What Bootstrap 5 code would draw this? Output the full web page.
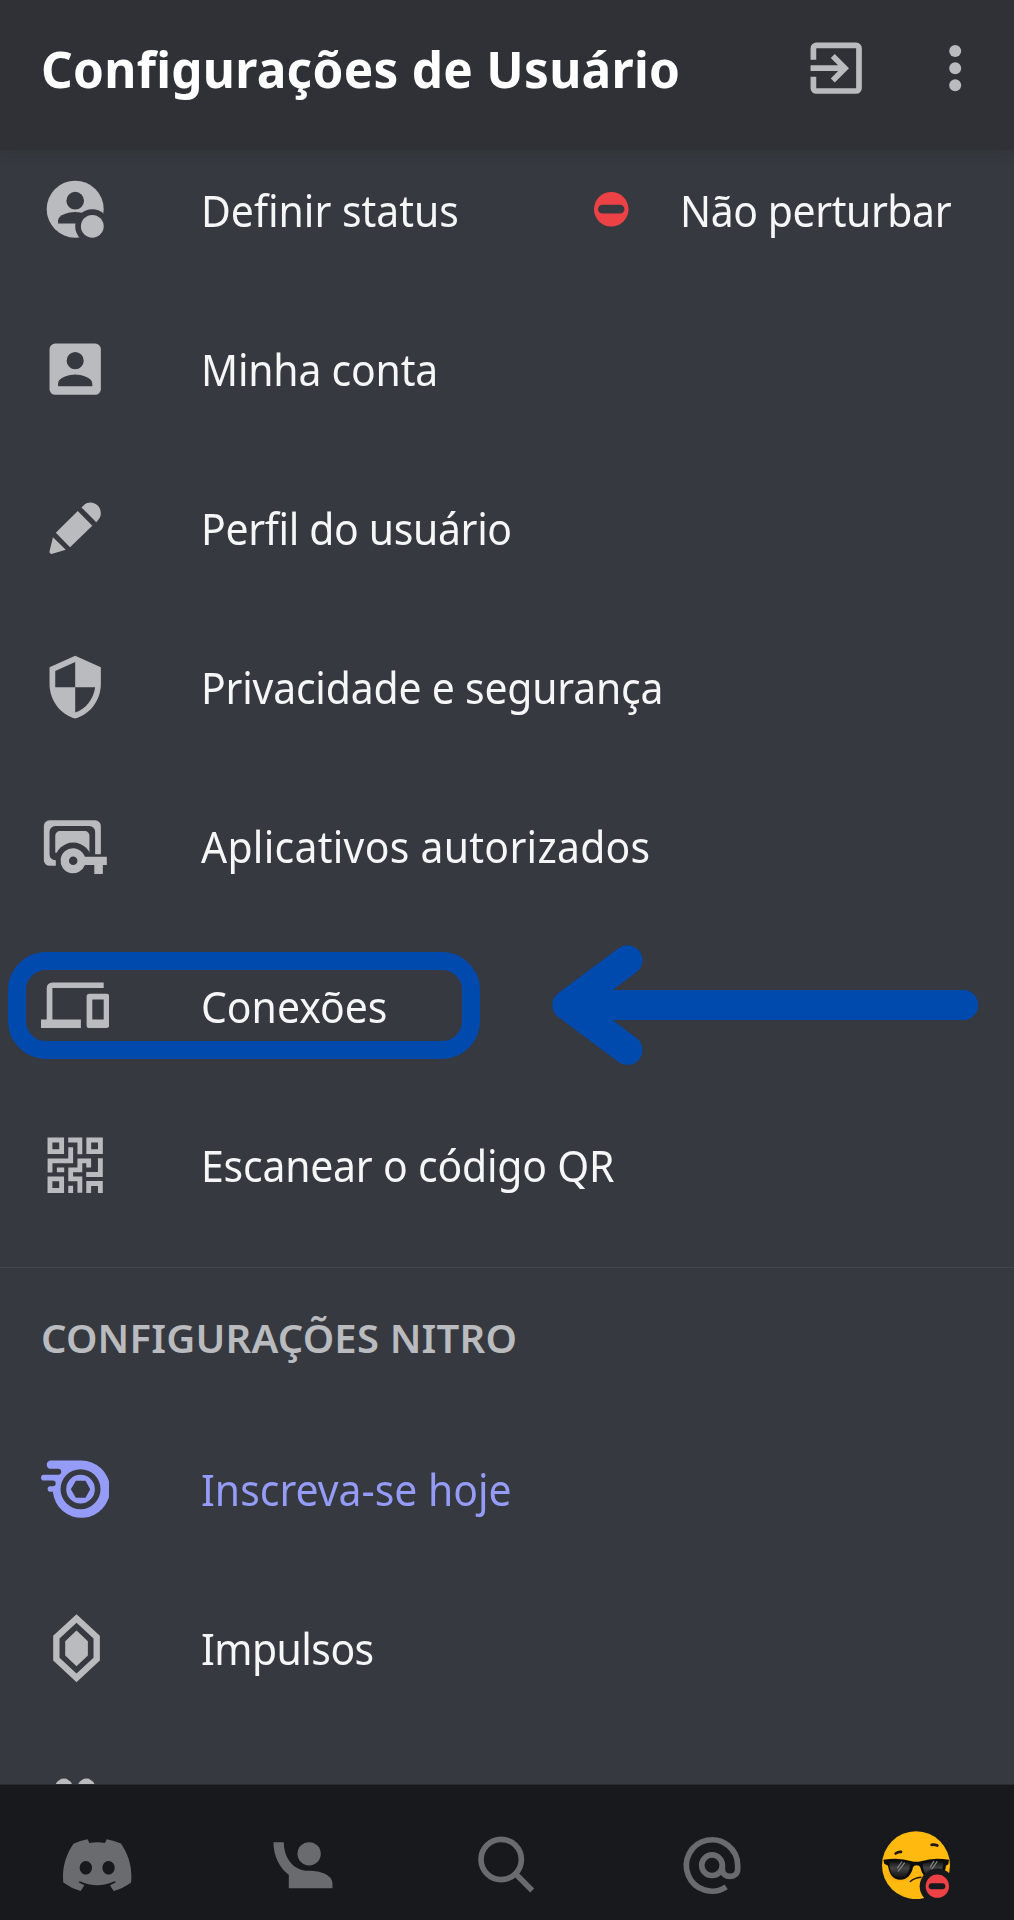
<!DOCTYPE html>
<html lang="pt-BR">
<head>
<meta charset="utf-8">
<meta name="viewport" content="width=device-width, initial-scale=1">
<title>Configurações de Usuário</title>
<link href="https://cdn.jsdelivr.net/npm/bootstrap@5.3.0/dist/css/bootstrap.min.css" rel="stylesheet">
<style>
body{background:#363940;font-family:"Noto Sans","Open Sans",sans-serif;color:#f6f6f7}
.app-shell{width:1014px;height:1920px}
.top-bar{height:150px;background:#303136;padding:0 0 13px 41px;z-index:2;box-shadow:0 2px 9px rgba(48,52,52,.9)}
.top-title{font-size:49.5px;font-weight:700;color:#fff;line-height:1;width:770px;letter-spacing:.28px;padding-top:3px}
.ico{width:68.4px;height:68.4px;fill:#b9bbbe;display:block;flex:none}
.exit-ico{margin-left:-9px}
.dots-ico{margin-left:51px}
.scroll-area{margin-top:-20px;z-index:1}
.item-row{height:159.2px;padding-left:40.8px}
.item-label{font-size:44px;line-height:60px;margin-left:91.5px;white-space:nowrap;transform:scaleX(.93);transform-origin:left center}
.track-loose{letter-spacing:.3px}
.track-snug{letter-spacing:-.22px}
.track-close{letter-spacing:-.36px}
.track-tight{letter-spacing:-.6px}
.status-dot{width:34.5px;height:34.5px;flex:none}
.status-box{left:594px}
.status-text{margin-left:51px;letter-spacing:-.45px}
.focus-box{left:8.3px;top:25.8px;width:472px;height:107px;border:18.6px solid #004aad;border-radius:38px}
.focus-arrow{left:545px;top:14px}
.group-title{border-top:1.5px solid #43464d;height:142.5px;padding:50.5px 0 0 41px;margin-top:22.5px;color:#b9bbbe;font-size:40px;font-weight:600;line-height:40px;letter-spacing:.2px}
.bottom-bar{height:136px;background:#18191c;border-top:1px solid #2a2c30;z-index:2;padding-top:46px}
.nav-strip{margin:0 -5px}
.nav-strip .ico{fill:#6a6b6f}
.nitro{color:#949cf7}
.nitro .ico{fill:#949cf7}
</style>
</head>
<body>
<div class="app-shell d-flex flex-column overflow-hidden">
  <header class="top-bar d-flex align-items-center position-relative flex-shrink-0">
    <h1 class="top-title mb-0">Configurações de Usuário</h1>
    <svg class="ico exit-ico" viewBox="0 0 24 24"><path d="M10.09 15.59 11.5 17l5-5-5-5-1.41 1.41L12.67 11H3v2h9.67zM19 3H5a2 2 0 0 0-2 2v4h2V5h14v14H5v-4H3v4a2 2 0 0 0 2 2h14a2 2 0 0 0 2-2V5a2 2 0 0 0-2-2z"/></svg>
    <svg class="ico dots-ico" viewBox="0 0 24 24"><circle cx="12" cy="6" r="2.1"/><circle cx="12" cy="12" r="2.1"/><circle cx="12" cy="18" r="2.1"/></svg>
  </header>

  <main class="scroll-area position-relative flex-grow-1 overflow-hidden">
    <div class="item-row d-flex align-items-center position-relative">
      <svg class="ico" viewBox="0 0 24 24"><defs><mask id="cut"><path fill="#fff" d="M0 0h24v24H0z"/><circle fill="#000" cx="12" cy="9" r="3.1"/><path fill="#000" d="M6 17v-1c0-2 3.6-3 6-3s6 1 6 3v1z"/><circle fill="#000" cx="18" cy="18" r="6"/></mask></defs><circle cx="12" cy="12" r="10" mask="url(#cut)"/><circle cx="18" cy="18" r="4"/></svg>
      <span class="item-label">Definir status</span>
      <div class="status-box position-absolute d-flex align-items-center">
        <svg class="status-dot" viewBox="0 0 34 34"><circle cx="17" cy="17" r="17" fill="#ed4245"/><rect x="4" y="12.6" width="26" height="8.6" rx="4.3" fill="#363940"/></svg>
        <span class="item-label status-text">Não perturbar</span>
      </div>
    </div>
    <div class="item-row d-flex align-items-center">
      <svg class="ico" viewBox="0 0 24 24"><path d="M3 5v14a2 2 0 0 0 2 2h14a2 2 0 0 0 2-2V5a2 2 0 0 0-2-2H5a2 2 0 0 0-2 2zm12 4a3 3 0 1 1-6 0 3 3 0 0 1 6 0zm-9 8c0-2 4-3.1 6-3.1s6 1.1 6 3.1v1H6z"/></svg>
      <span class="item-label track-snug">Minha conta</span>
    </div>
    <div class="item-row d-flex align-items-center">
      <svg class="ico" viewBox="0 0 24 24"><path d="m12.9 6 5.1 5.1-7.8 7.6-5-5.1zM4.2 15.2l4.5 4.4-4.7 1.4c-.6.2-1.1-.2-1-.9zM14.2 4.7l1-.9c1.2-1.1 3.2-1.1 4.5.1 1.5 1.4 1.7 3.5.6 4.9l-.9 1.1z"/></svg>
      <span class="item-label track-close">Perfil do usuário</span>
    </div>
    <div class="item-row d-flex align-items-center">
      <svg class="ico" viewBox="0 0 24 24"><path fill-rule="evenodd" d="M12 1 3 5v6c0 5.55 3.84 10.74 9 12 5.16-1.26 9-6.45 9-12V5zM12 12H5V6.3l7-3.1zM12 12h7c-.53 4.12-3.28 7.7-7 8.9z"/></svg>
      <span class="item-label track-snug">Privacidade e segurança</span>
    </div>
    <div class="item-row d-flex align-items-center">
      <svg class="ico" viewBox="0 0 24 24"><defs><mask id="keycut"><path fill="#fff" d="M0 0h24v24H0z"/><circle fill="#000" cx="11.3" cy="17.1" r="6.4"/></mask></defs><path d="M5.2 18.9H3a2 2 0 0 1-2-2V4.9a2 2 0 0 1 2-2h16a2 2 0 0 1 2 2v9.9h-2V6.9a2 2 0 0 0-2-2H5a2 2 0 0 0-2 2v8a2 2 0 0 0 2 2h.2z"/><path mask="url(#keycut)" d="M5 8.3a1.6 1.6 0 0 1 1.6-1.6h8.8A1.6 1.6 0 0 1 17 8.3v6H5z"/><path fill-rule="evenodd" d="M11.3 12.7c1.9 0 3.5 1.3 4.1 3h7.7v2.9h-1.4v3.2h-3v-3.2h-3.3a4.4 4.4 0 1 1-4.1-5.9zm0 2.9a1.5 1.5 0 1 0 0 3 1.5 1.5 0 0 0 0-3z"/></svg>
      <span class="item-label track-loose">Aplicativos autorizados</span>
    </div>
    <div class="item-row d-flex align-items-center position-relative">
      <svg class="ico" viewBox="0 0 24 24"><path d="M4 6h18V4H4a2 2 0 0 0-2 2v11H0v3h14v-3H4zm19 2h-6a1 1 0 0 0-1 1v10a1 1 0 0 0 1 1h6a1 1 0 0 0 1-1V9a1 1 0 0 0-1-1zm-1 9h-4v-7h4z"/></svg>
      <span class="item-label">Conexões</span>
      <div class="focus-box position-absolute"></div>
      <svg class="focus-arrow position-absolute" width="440" height="130" viewBox="545 940 440 130" fill="none" stroke="#004aad" stroke-width="30" stroke-linecap="round" stroke-linejoin="round"><path d="M627.5 960.3 567.3 1005l60.2 45M567.3 1005H963.3M575 1005l18-8v16z"/></svg>
    </div>
    <div class="item-row d-flex align-items-center">
      <svg class="ico" viewBox="32.4 31.4 205.2 205.2"><g fill="none" stroke="#b9bbbe" stroke-width="14.5"><path d="M59.3 58.5h35v35h-35zM175.7 58.5h35v35h-35zM59.3 175h35v35h-35zM114 58.5h35V101M121.5 80v41h-62v35M175.5 141v-20H149v27h-27.5v27H149v42M210.5 113v49H168M121.5 196v21.5M175.5 217.5V189h35v28.5M80 148h22"/></g></svg>
      <span class="item-label track-snug">Escanear o código QR</span>
    </div>

    <h2 class="group-title mb-0">CONFIGURAÇÕES NITRO</h2>

    <div class="item-row nitro d-flex align-items-center">
      <svg class="ico" viewBox="32.4 41.4 205.2 205.2"><path fill-rule="evenodd" d="M62 58h90a86 86 0 1 1-84 94H58a9 9 0 0 1 0-17h10a7 7 0 0 0 0-17H41a8 8 0 0 1 0-17h43a9 9 0 0 0 0-18H62a12.5 12.5 0 0 1 0-25zM151 84a60 60 0 1 0 0 120 60 60 0 0 0 0-120zm0 17a43 43 0 1 1 0 86 43 43 0 0 1 0-86zm-14 18-15 25 15 26h29l14-26-14-25z"/></svg>
      <span class="item-label">Inscreva-se hoje</span>
    </div>
    <div class="item-row d-flex align-items-center">
      <svg class="ico" viewBox="32.4 518.4 205.2 205.2"><path fill-rule="evenodd" d="m139 519 70 65v74l-70 65-70-65v-74zm0 26-51 47v58l51 47 51-47v-58zM139 568l34 32v43l-34 32-34-32v-43z"/></svg>
      <span class="item-label track-tight">Impulsos</span>
    </div>
    <div class="item-row d-flex align-items-center">
      <svg class="ico" viewBox="0 0 68.4 68.4"><g fill="none" stroke="#b9bbbe" stroke-width="6"><circle cx="22.9" cy="14.3" r="5.7"/><circle cx="45.4" cy="14.3" r="5.7"/></g></svg>
    </div>
  </main>

  <nav class="bottom-bar position-relative flex-shrink-0">
    <div class="nav-strip d-flex">
      <div class="flex-fill d-flex justify-content-center"><svg class="ico" viewBox="0 -15.4 127.14 127.14"><path d="M107.7,8.07A105.15,105.15,0,0,0,81.47,0a72.06,72.06,0,0,0-3.36,6.83A97.68,97.68,0,0,0,49,6.83,72.37,72.37,0,0,0,45.64,0,105.89,105.89,0,0,0,19.39,8.09C2.79,32.65-1.71,56.6.54,80.21h0A105.73,105.73,0,0,0,32.71,96.36,77.7,77.7,0,0,0,39.6,85.25a68.42,68.42,0,0,1-10.85-5.18c.91-.66,1.8-1.34,2.66-2a75.57,75.57,0,0,0,64.32,0c.87.71,1.76,1.39,2.66,2a68.68,68.68,0,0,1-10.87,5.19,77,77,0,0,0,6.89,11.1A105.25,105.25,0,0,0,126.6,80.22h0C129.24,52.84,122.09,29.11,107.7,8.07ZM42.45,65.69C36.18,65.69,31,60,31,53s5-12.74,11.43-12.74S54,46,53.89,53,48.84,65.69,42.45,65.69Zm42.24,0C78.41,65.69,73.25,60,73.25,53s5-12.74,11.44-12.74S96.23,46,96.12,53,91.08,65.69,84.69,65.69Z"/></svg></div>
      <div class="flex-fill d-flex justify-content-center"><svg class="ico" viewBox="804.6 212.4 205.2 205.2"><circle cx="928" cy="281" r="35"/><path d="M821 246h31c0 46 28 86 74 86 40 0 72 14 72 38v14H867v-40c-28-22-46-56-46-98z"/></svg></div>
      <div class="flex-fill d-flex justify-content-center"><svg class="ico" viewBox="68.4 212.4 205.2 205.2"><g fill="none" stroke="#6a6b6f" stroke-width="17"><circle cx="153" cy="298" r="60.5"/><path d="m196 341 50 50"/></g></svg></div>
      <div class="flex-fill d-flex justify-content-center"><svg class="ico" viewBox="682.4 212.4 205.2 205.2"><g fill="none" stroke="#6a6b6f" stroke-width="17"><circle cx="784.5" cy="315" r="31"/><path d="M827 380A77 77 0 1 1 861.5 315v12c0 28-46 30-46 0v-12"/></g></svg></div>
      <div class="flex-fill d-flex justify-content-center"><svg class="ico" viewBox="66 62.4 205.2 205.2">
        <defs><mask id="badgecut"><path fill="#fff" d="M50 50h240v240H50z"/><circle cx="232" cy="228" r="53" fill="#000"/></mask><linearGradient id="lens" x1="0" y1="0" x2="0" y2="1"><stop offset="0" stop-color="#141414"/><stop offset=".4" stop-color="#444"/><stop offset="1" stop-color="#111"/></linearGradient><radialGradient id="glow"><stop offset="0" stop-color="#f57c00"/><stop offset="1" stop-color="#ffb90f" stop-opacity="0"/></radialGradient></defs>
        <g mask="url(#badgecut)"><circle cx="168" cy="165" r="102" fill="#ffb90f"/><ellipse cx="118" cy="192" rx="48" ry="32" fill="url(#glow)"/><ellipse cx="215" cy="190" rx="48" ry="30" fill="url(#glow)"/>
        <g fill="none" stroke="#201510" stroke-linecap="round"><path stroke-width="8" d="M107 130q8-6 16-5M215 104q8-2 17 2"/><path stroke-width="4.5" d="M151 214q12-11 32-13"/></g>
        <path fill="#0c0c0c" d="M70 149q45-9 85 4 14 4 28 0 40-13 84-4l-2 13-7 5c-3 25-16 42-38 42-22 0-34-16-39-37-3-9-19-9-22 0-5 22-18 37-38 37-22 0-33-16-37-42l-11-6z"/>
        <path fill="url(#lens)" d="M88 157q30-7 62 4c0 20-10 42-30 42-22 0-31-18-32-46zM188 161q30-10 62-4c-2 28-12 46-32 46s-30-22-30-42z"/>
        <g stroke="#888" stroke-width="3.5"><path d="m126 154-14 20M134 157l-20 27M222 152l-12 20M232 153l-19 28"/></g></g>
        <circle cx="232" cy="228" r="35" fill="#ed4245"/><rect x="206" y="219" width="50" height="18" rx="9" fill="#18191c"/></svg></div>
    </div>
  </nav>
</div>
<script src="https://cdn.jsdelivr.net/npm/bootstrap@5.3.0/dist/js/bootstrap.bundle.min.js"></script>
</body>
</html>
